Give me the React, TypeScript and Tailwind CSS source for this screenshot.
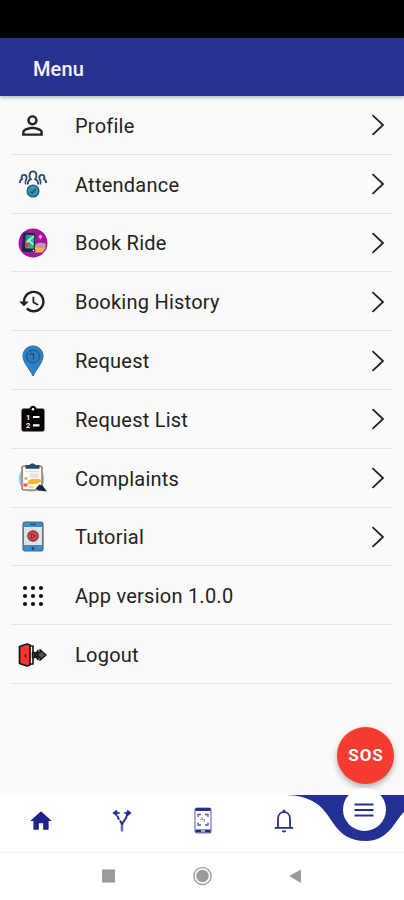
import type { ReactNode } from "react";
import { MdHistory, MdHome, MdPersonOutline } from "react-icons/md";

function AttendanceIcon() {
  return (
    <svg width="30" height="30" viewBox="0 0 30 30" fill="none">
      <g stroke="#27476b" strokeWidth="1.800">
        <path d="M9.800 15.500c0-3 .9-4.500 2.900-5.300C10.800 8 11 2.300 15 2.300s4.200 5.700 2.300 7.900c2 .8 2.900 2.300 2.900 5.300" />
        <path d="M1.800 14c0-2.200.7-3.300 2.300-4C3 8 3.600 5.800 6 5.800c1.600 0 2.700 1 2.700 3 0 1.200-.4 2-1 2.600M28.200 14c0-2.200-.7-3.300-2.300-4C27 8 26.400 5.800 24 5.800c-1.600 0-2.700 1-2.700 3 0 1.200.4 2 1 2.600" />
        <path d="M7.500 11v4.500M22.500 11v4.500" strokeWidth="1.500" />
      </g>
      <circle cx="15" cy="22" r="5.800" fill="#2c9bad" stroke="#28607b" strokeWidth="1.500" />
      <path d="M12.500 22.500l1.600 1.500 3.500-4" stroke="#1d4d68" strokeWidth="1.600" />
    </svg>
  );
}

function RideIcon() {
  return (
    <svg width="30" height="30" viewBox="0 0 30 30">
      <circle cx="15" cy="15" r="14.500" fill="#a5159b" />
      <path d="M17 17c3-3 8-2.500 11-1l-1 5H16z" fill="#c39aa3" />
      <path d="M13 21c5-2.500 9 0 14.500-1.500l-2.500 5H13z" fill="#f2b14d" />
      <g transform="rotate(3 11 14)">
        <rect x="4.500" y="5" width="12.500" height="19" rx="1.500" fill="#142c43" />
        <rect x="7.500" y="7" width="8.500" height="13.500" fill="#27b98f" />
        <path d="M7.500 7h4l-4 7z" fill="#347fae" />
        <path d="M8.500 14.500L15.500 8M10 11.500l5.500 5" stroke="#c9f5d2" strokeWidth="1.400" />
        <path d="M7.500 14l5.500 3-5.500 3.500z" fill="#e63e4b" />
      </g>
      <circle cx="15.500" cy="22.500" r="2" fill="#362245" />
      <circle cx="15.500" cy="22.500" r=".8" fill="#fff" />
      <path d="M22.500 6.500l2 2-2 3-2-3z" fill="#f4a1c9" />
    </svg>
  );
}

function PinIcon() {
  return (
    <svg width="22" height="32" viewBox="0 0 22 32">
      <path
        d="M11 1C5.300 1 1 5.300 1 11c0 6.500 6 12 10 20 4-8 10-13.500 10-20 0-5.700-4.300-10-10-10z"
        fill="#2585ce"
        stroke="#456679"
      />
      <circle cx="11" cy="11.500" r="6.500" fill="#2b7fc0" stroke="#285b8a" strokeWidth="1.300" />
      <path d="M8 8.700h3.500v6" fill="none" stroke="#264e7d" strokeWidth="1.400" />
    </svg>
  );
}

function RequestListIcon() {
  return (
    <svg width="24" height="28" viewBox="0 0 24 28">
      <path
        d="M2.500 3.500h6C9 1.800 10.300.7 12 .7s3 1.100 3.500 2.800h6A2 2 0 0 1 23.500 5.500v19a2 2 0 0 1-2 2h-19a2 2 0 0 1-2-2v-19a2 2 0 0 1 2-2z"
        fill="#050505"
      />
      <circle cx="12" cy="4.200" r="1.300" fill="#fff" />
      <path d="M12 12h6.500M12 20.300h6.500" stroke="#fff" strokeWidth="2.200" />
      <text x="5" y="14.600" fontSize="7.500" fontWeight="700" fill="#fff" fontFamily="Roboto, sans-serif">1</text>
      <text x="5" y="23.400" fontSize="7.500" fontWeight="700" fill="#fff" fontFamily="Roboto, sans-serif">2</text>
    </svg>
  );
}

function ComplaintsIcon() {
  return (
    <svg width="30" height="30" viewBox="0 0 30 30">
      <circle cx="13.500" cy="16" r="12.800" fill="#8bd5e7" />
      <rect x="4" y="3" width="20" height="24" rx="2" fill="#fdf9ef" stroke="#a57d70" strokeWidth="1.600" />
      <path d="M7.500 2h4c1-2 5-2 6 0h4v3.800h-14z" fill="#244b68" />
      <path d="M7 8.500h14M11 11.500h10" stroke="#d8e3ec" strokeWidth="1.500" />
      <path d="M6.500 15.500h3" stroke="#9acb70" strokeWidth="2.500" />
      <path d="M5.500 22h4" stroke="#ee5750" strokeWidth="3" />
      <path d="M12 13.500h8" stroke="#e6d6ee" strokeWidth="2" />
      <path d="M9.500 18.500l4-2.500h8l2 2-5 3h-8z" fill="#f9b431" />
      <path d="M11 24h5" stroke="#f2cc66" strokeWidth="1.500" />
      <path d="M17.500 25.500l4-4 3 1 4.500 6-8-1z" fill="#172840" />
    </svg>
  );
}

function TutorialIcon() {
  return (
    <svg width="22" height="31" viewBox="0 0 22 31">
      <rect x="1" y="1" width="20" height="29" rx="2.500" fill="#2f92df" stroke="#58636b" strokeWidth="1.200" />
      <path d="M1.500 5.500h19v19h-19z" fill="#dbe4e7" stroke="#596870" strokeWidth=".8" />
      <path d="M8 3.300h6" stroke="#174f83" strokeWidth="1.300" />
      <circle cx="11" cy="27.400" r="1.400" fill="#15406d" />
      <circle cx="11" cy="15" r="5.200" fill="#e3424d" stroke="#713643" strokeWidth="1.200" />
      <path d="M9.300 12.500l4 2.500-4 2.500z" fill="#d4525c" stroke="#712f3e" />
    </svg>
  );
}

function DotsIcon() {
  return (
    <svg width="22" height="22" viewBox="0 0 22 22" fill="#111">
      {[3, 11, 19].map((y) =>
        [3, 11, 19].map((x) => <circle key={`${x}-${y}`} cx={x} cy={y} r="2.100" />),
      )}
    </svg>
  );
}

function LogoutIcon() {
  return (
    <svg width="30" height="26" viewBox="0 0 30 26" stroke="#161616" strokeLinejoin="round">
      <path d="M10 4h5v18h-5" fill="#fafafa" strokeWidth="1.600" />
      <path d="M1.500 4.500L9 2l3 1v20l-3 1-7.500-2.500z" fill="#f3372f" strokeWidth="1.700" />
      <path d="M7.500 12.500v3" strokeWidth="1.200" />
      <path d="M14.500 10.500h2.500v5h-2.500zM17 13l3-4.500v9z" fill="#444" strokeWidth="1.500" />
      <path d="M20 11h2V7.800l6 5.200-6 5.200V15h-2z" fill="#555" strokeWidth="1.500" />
    </svg>
  );
}

function RouteIcon() {
  return (
    <svg width="20" height="24" viewBox="0 0 20 24" fill="none" stroke="#272d91">
      <path d="M10 22.500V14" stroke="#6c70b5" strokeWidth="2.600" />
      <path d="M10 15.500c0-3-4-3.500-4.700-10" strokeWidth="2" strokeDasharray="4.500 1.200" />
      <path d="M10 15.500c0-3 5-4 5.200-11" strokeWidth="2" />
      <path d="M.8 4l3.700-3L5 3l3 1-3 1-.5 2zM19.200 4l-3.700-3-.5 2-3 1 3 1 .5 2z" fill="#272d91" strokeWidth=".6" />
    </svg>
  );
}

function ScanIcon() {
  return (
    <svg width="18" height="27" viewBox="0 0 18 27" fill="none" stroke="#272d91">
      <rect x="1" y="1" width="16" height="25" rx="2" fill="#fff" stroke="#7073b4" strokeWidth="1.200" />
      <path d="M1.500 2.500h15M1.500 24h15" strokeWidth="3" />
      <path d="M7 24h4" stroke="#fff" strokeWidth="1.200" />
      <path d="M4 10V7.500h3M11 7.500h3V10M4 15.500V18h3M11 18h3v-2.500" stroke="#555ba1" strokeWidth="1.300" />
      <path d="M8 10v2.500h2.500V15M6 12.500h1" stroke="#8a8ec0" />
    </svg>
  );
}

function BellIcon() {
  return (
    <svg width="20" height="24" viewBox="0 0 20 24" fill="none" stroke="#272d91">
      <path d="M4 18.300V10c0-4 2.500-6.800 6-6.800s6 2.800 6 6.800v8.300M.8 18.800h18.400" strokeWidth="1.800" />
      <path d="M10 .8v2.500" strokeWidth="2.500" />
      <path d="M7.700 21.500h4.600c-.3 1.200-1.100 1.900-2.300 1.900s-2-.7-2.300-1.900z" fill="#272d91" stroke="none" />
    </svg>
  );
}

const items: { label: string; icon: ReactNode; arrow?: boolean }[] = [
  { label: "Profile", icon: <MdPersonOutline size={31} />, arrow: true },
  { label: "Attendance", icon: <AttendanceIcon />, arrow: true },
  { label: "Book Ride", icon: <RideIcon />, arrow: true },
  { label: "Booking History", icon: <MdHistory size={29} />, arrow: true },
  { label: "Request", icon: <PinIcon />, arrow: true },
  { label: "Request List", icon: <RequestListIcon />, arrow: true },
  { label: "Complaints", icon: <ComplaintsIcon />, arrow: true },
  { label: "Tutorial", icon: <TutorialIcon />, arrow: true },
  { label: "App version 1.0.0", icon: <DotsIcon /> },
  { label: "Logout", icon: <LogoutIcon /> },
];

export default function App() {
  return (
    <div className="relative flex h-[900px] w-full flex-col overflow-hidden bg-[#fafafa] font-['Roboto',sans-serif]">
      <div className="h-[38px] shrink-0 bg-black" />
      <header className="z-10 flex h-[58px] shrink-0 items-center bg-[#283391] pl-[33px] pt-[3px] shadow-[0_1px_4px_rgba(0,40,50,0.4)]">
        <h1 className="text-[20px] font-medium tracking-[0.1px] text-[#f4f4ff]">Menu</h1>
      </header>

      <ul className="flex-1 px-[11px]">
        {items.map((item) => (
          <li
            key={item.label}
            className="flex h-[58.800px] items-center border-b border-[#e3e3e3] pr-2 pt-px text-[#222]"
          >
            <span className="flex w-[43px] shrink-0 justify-center">{item.icon}</span>
            <span className="ml-[21px] flex-1 pt-px text-[20px] tracking-[0.240px]">{item.label}</span>
            {item.arrow && (
              <svg width="14" height="22" viewBox="0 0 14 22" fill="none" stroke="#222" strokeWidth="1.800">
                <path d="M1.500 1.200l10.500 9.800-10.500 9.800" />
              </svg>
            )}
          </li>
        ))}
      </ul>

      {/* floating emergency button */}
      <button className="absolute right-2.5 top-[727px] flex size-[57px] items-center justify-center rounded-full bg-[#f63c31] pl-px text-[17px] font-bold tracking-[0.900px] text-white shadow-[0_3px_6px_rgba(0,0,0,0.3)]">
        SOS
      </button>

      <nav className="relative flex h-[57px] shrink-0 items-start bg-white">
        <svg className="absolute right-0 top-0" width="118" height="57" viewBox="0 0 118 57">
          <path d="M0 0h118v17c-8 7-15 29-38 29-33 0-32-28-52-39C21 3 12 0 0 0z" fill="#233094" />
        </svg>
        <span className="flex h-[51px] w-[81px] items-center justify-center text-[#1d238d]">
          <MdHome size={26} />
        </span>
        <span className="flex h-[51px] w-[81px] items-center justify-center">
          <RouteIcon />
        </span>
        <span className="flex h-[51px] w-[81px] items-center justify-center">
          <ScanIcon />
        </span>
        <span className="flex h-[51px] w-[81px] items-center justify-center">
          <BellIcon />
        </span>
        <span className="relative flex flex-1 justify-center">
          <span className="-mt-[7px] flex size-[43px] items-center justify-center rounded-full bg-white">
            <svg width="20" height="14" viewBox="0 0 20 14" stroke="#272d91" strokeWidth="1.800">
              <path d="M.5 1.500h19M.5 7h19M.5 12.500h19" />
            </svg>
          </span>
        </span>
      </nav>

      <div className="flex h-12 shrink-0 justify-center border-t border-[#f5f5f5] bg-white">
        <svg width="202" height="46" viewBox="0 0 202 46" fill="#9b9b9b">
          <rect x="1" y="16.500" width="13" height="13" />
          <circle cx="101.500" cy="23" r="6.200" />
          <circle cx="101.500" cy="23" r="8.600" fill="none" stroke="#a3a3a3" strokeWidth="1.500" />
          <path d="M188 23L200 16.500v13.500z" />
        </svg>
      </div>
    </div>
  );
}
